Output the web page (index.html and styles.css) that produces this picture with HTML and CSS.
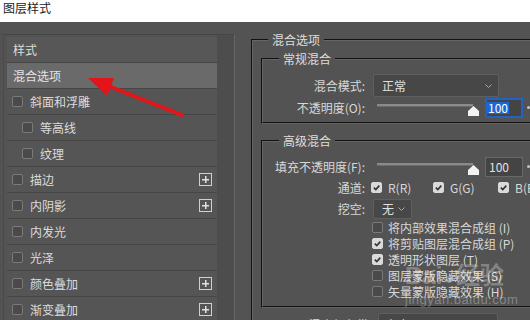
FILE: index.html
```html
<!DOCTYPE html>
<html lang="zh-CN">
<head>
    <meta charset="UTF-8">
    <title>图层样式</title>
    <link rel="stylesheet" href="styles.css">
</head>
<body>
    <div class="titlebar">图层样式</div>

    <div class="dialog">
        <div class="styles-panel">
            <ul class="style-list">
                <li class="row plain">样式</li>
                <li class="row plain selected">混合选项</li>
                <li class="row"><span class="box"></span>斜面和浮雕</li>
                <li class="row sub"><span class="box"></span>等高线</li>
                <li class="row sub"><span class="box"></span>纹理</li>
                <li class="row"><span class="box"></span>描边<span class="plus"></span></li>
                <li class="row"><span class="box"></span>内阴影<span class="plus"></span></li>
                <li class="row"><span class="box"></span>内发光</li>
                <li class="row"><span class="box"></span>光泽</li>
                <li class="row"><span class="box"></span>颜色叠加<span class="plus"></span></li>
                <li class="row"><span class="box"></span>渐变叠加<span class="plus"></span></li>
            </ul>
            <div class="gutter"></div>
        </div>

        <div class="options">
            <fieldset class="group outer">
                <legend>混合选项</legend>

                <fieldset class="group">
                    <legend>常规混合</legend>
                    <div class="field h23">
                        <label>混合模式:</label>
                        <div class="select mode"><span>正常</span><svg width="7" height="4" viewBox="0 0 7 4"><path d="M0.5 0.5 L3.5 3.5 L6.5 0.5" fill="none" stroke="#aaa"/></svg></div>
                    </div>
                    <div class="field h21">
                        <label>不透明度(O):</label>
                        <div class="slider"><div class="track"></div><svg class="thumb" width="11" height="10" viewBox="0 0 11 10"><path d="M5.5 0 L11 5 L11 10 L0 10 L0 5 Z" fill="#f2f2f2"/></svg></div>
                        <div class="num active"><span class="sel">100</span></div>
                        <span class="dot"></span>
                    </div>
                </fieldset>

                <fieldset class="group advanced">
                    <legend>高级混合</legend>
                    <div class="field h21">
                        <label>填充不透明度(F):</label>
                        <div class="slider"><div class="track"></div><svg class="thumb" width="11" height="10" viewBox="0 0 11 10"><path d="M5.5 0 L11 5 L11 10 L0 10 L0 5 Z" fill="#f2f2f2"/></svg></div>
                        <div class="num">100</div>
                        <span class="dot"></span>
                    </div>
                    <div class="field h21">
                        <label>通道:</label>
                        <div class="channels">
                            <span class="chan r"><span class="box on"><svg width="9" height="9" viewBox="0 0 9 9"><path d="M1.8 4.6 L3.8 6.6 L7.3 2.6" fill="none" stroke="#333" stroke-width="1.6"/></svg></span>R(R)</span>
                            <span class="chan g"><span class="box on"><svg width="9" height="9" viewBox="0 0 9 9"><path d="M1.8 4.6 L3.8 6.6 L7.3 2.6" fill="none" stroke="#333" stroke-width="1.6"/></svg></span>G(G)</span>
                            <span class="chan"><span class="box on"><svg width="9" height="9" viewBox="0 0 9 9"><path d="M1.8 4.6 L3.8 6.6 L7.3 2.6" fill="none" stroke="#333" stroke-width="1.6"/></svg></span>B(B)</span>
                        </div>
                    </div>
                    <div class="field h21">
                        <label>挖空:</label>
                        <div class="select knock"><span>无</span><svg width="7" height="4" viewBox="0 0 7 4"><path d="M0.5 0.5 L3.5 3.5 L6.5 0.5" fill="none" stroke="#aaa"/></svg></div>
                    </div>
                    <ul class="checks">
                        <li><span class="box"></span>将内部效果混合成组 (I)</li>
                        <li><span class="box on"><svg width="9" height="9" viewBox="0 0 9 9"><path d="M1.8 4.6 L3.8 6.6 L7.3 2.6" fill="none" stroke="#333" stroke-width="1.6"/></svg></span>将剪贴图层混合成组 (P)</li>
                        <li><span class="box on"><svg width="9" height="9" viewBox="0 0 9 9"><path d="M1.8 4.6 L3.8 6.6 L7.3 2.6" fill="none" stroke="#333" stroke-width="1.6"/></svg></span>透明形状图层 (T)</li>
                        <li><span class="box"></span>图层蒙版隐藏效果 (S)</li>
                        <li><span class="box"></span>矢量蒙版隐藏效果 (H)</li>
                    </ul>
                </fieldset>

                <div class="field band">
                    <label>混合颜色带:</label>
                    <div class="select bandsel"><span>灰色</span></div>
                </div>
            </fieldset>
        </div>
    </div>

    <div class="watermark">
        <div class="wm-logo">Bai<span class="paw">●</span>经验</div>
        <div class="wm-url">jingyan.baidu.com</div>
    </div>

    <svg class="arrow" width="530" height="320" viewBox="0 0 530 320">
        <line x1="106" y1="85" x2="182" y2="115" stroke="#e3151a" stroke-width="4" stroke-linecap="round"/>
        <polygon points="88,78 114,78 107,96" fill="#e3151a"/>
    </svg>
</body>
</html>
```

FILE: styles.css
```css
* {
    box-sizing: border-box;
}

body {
    margin: 0;
    width: 530px;
    height: 320px;
    overflow: hidden;
    position: relative;
    font-family: "Noto Sans CJK SC", "Liberation Sans", sans-serif;
    font-size: 12px;
    background: #535353;
    color: #d8d8d8;
}

ul {
    list-style: none;
    margin: 0;
    padding: 0;
}

.titlebar {
    height: 22px;
    background: #fff;
    color: #222;
    padding: 1px 0 0 3px;
    line-height: 14px;
}

.dialog {
    display: flex;
    align-items: flex-start;
    padding: 10px 0 0 3px;
    height: 298px;
}

/* left list */
.styles-panel {
    display: flex;
    flex: none;
    width: 232px;
    height: 300px;
    margin-top: 2px;
    padding: 2px 0 0 3px;
    border-top: 1px solid #464646;
    border-left: 1px solid #4a4a4a;
    border-right: 1px solid #666;
}

.style-list {
    width: 210px;
}

.gutter {
    flex: 1;
    background: #4d4d4d;
    margin-top: -2px;
}

.row {
    display: flex;
    align-items: center;
    gap: 7px;
    height: 26px;
    padding: 0 5px;
    border-bottom: 1px solid #464646;
    background: #555;
    color: #dcdcdc;
}

.row.plain {
    padding-left: 6px;
    background: #575757;
}

.row.selected {
    background: #6a6a6a;
    color: #e4e4e4;
}

.row.sub {
    padding-left: 15px;
}

.box {
    flex: none;
    width: 11px;
    height: 11px;
    border: 1px solid #7a7a7a;
    border-radius: 2px;
    background: #4a4a4a;
    display: inline-flex;
    align-items: center;
    justify-content: center;
}

.box.on {
    background: #dadada;
    border-color: #dadada;
}

.plus {
    margin-left: auto;
    width: 13px;
    height: 13px;
    border: 1px solid #d0d0d0;
    position: relative;
}

.plus::before,
.plus::after {
    content: "";
    position: absolute;
    background: #e0e0e0;
}

.plus::before {
    left: 2px;
    right: 2px;
    top: 5px;
    height: 1px;
    box-shadow: 0 0.5px 0 #e0e0e0;
}

.plus::after {
    top: 2px;
    bottom: 2px;
    left: 5px;
    width: 1px;
    box-shadow: 0.5px 0 0 #e0e0e0;
}

/* right options */
.options {
    flex: none;
    width: 320px;
    margin-left: 16px;
}

fieldset.group {
    margin: 0;
    padding: 0;
    min-width: 0;
    border: 2px groove #666;
}

fieldset.group legend {
    padding: 0 4px;
    line-height: 16px;
    color: #dedede;
    margin-left: 16px;
}

fieldset.outer {
    border-right: none;
    border-bottom: none;
    height: 320px;
}

fieldset.outer > legend {
    margin-left: 15px;
}

fieldset.outer > fieldset.group {
    margin: 3px 0 0 8px;
    padding: 7px 0 4px;
    border-right: none;
}

fieldset.outer > fieldset.advanced {
    margin-top: 9px;
    padding-bottom: 7px;
}

.field {
    display: flex;
    align-items: center;
}

.field label {
    flex: none;
    width: 102px;
    margin-right: 8px;
    text-align: right;
}

.h23 {
    height: 23px;
}

.h21 {
    height: 21px;
}

.select {
    display: flex;
    align-items: center;
    justify-content: space-between;
    height: 100%;
    padding: 0 6px 0 8px;
    background: #474747;
    border: 1px solid #5f5f5f;
    border-radius: 2px;
    color: #e0e0e0;
}

.select.mode {
    width: 126px;
}

.select.knock {
    width: 39px;
    height: 20px;
}

.slider {
    position: relative;
    align-self: flex-start;
    width: 96px;
    height: 21px;
    margin-left: 4px;
}

.track {
    margin-top: 7px;
    height: 3px;
    background: #8a8a8a;
    border-bottom: 1px solid #6a6a6a;
}

.thumb {
    position: absolute;
    right: -6px;
    top: 9px;
}

.num {
    width: 38px;
    height: 20px;
    margin-left: 12px;
    padding-left: 3px;
    line-height: 18px;
    background: #444;
    border: 1px solid #686868;
    color: #e0e0e0;
}

.num.active {
    padding-left: 0;
    border: 2px solid #2462c2;
    line-height: 16px;
}

.sel {
    display: inline-block;
    background: #1a68d8;
    color: #fff;
    padding: 0 1px;
    line-height: 12px;
    margin-top: 2px;
    vertical-align: top;
}

.dot {
    width: 3px;
    height: 3px;
    border-radius: 50%;
    background: #c4c4c4;
    margin-left: 4px;
}

.channels {
    display: flex;
    margin-left: -2px;
}

.chan {
    display: flex;
    align-items: center;
    gap: 6px;
}

.chan.r {
    width: 62px;
}

.chan.g {
    width: 65px;
}

.checks {
    margin-left: 109px;
}

.checks li {
    display: flex;
    align-items: center;
    gap: 5px;
    height: 16px;
}

.field.band {
    margin: 5px 0 0 9px;
    height: 23px;
    align-items: flex-start;
}

.field.band label {
    width: 110px;
    margin-right: 6px;
    line-height: 20px;
    margin-top: 2px;
}

.select.bandsel {
    width: 120px;
    height: 23px;
}

/* overlays */
.watermark {
    position: absolute;
    left: 405px;
    top: 262px;
    color: rgba(255, 255, 255, 0.3);
    pointer-events: none;
}

.wm-logo {
    font-family: "Liberation Sans", "Noto Sans CJK SC", sans-serif;
    font-size: 24px;
    font-weight: bold;
    line-height: 28px;
}

.wm-logo .paw {
    font-size: 16px;
    margin: 0 2px;
}

.wm-url {
    font-family: "Liberation Sans", sans-serif;
    font-size: 13px;
    line-height: 14px;
    letter-spacing: 0.5px;
}

.arrow {
    position: absolute;
    left: 0;
    top: 0;
    pointer-events: none;
}
```
